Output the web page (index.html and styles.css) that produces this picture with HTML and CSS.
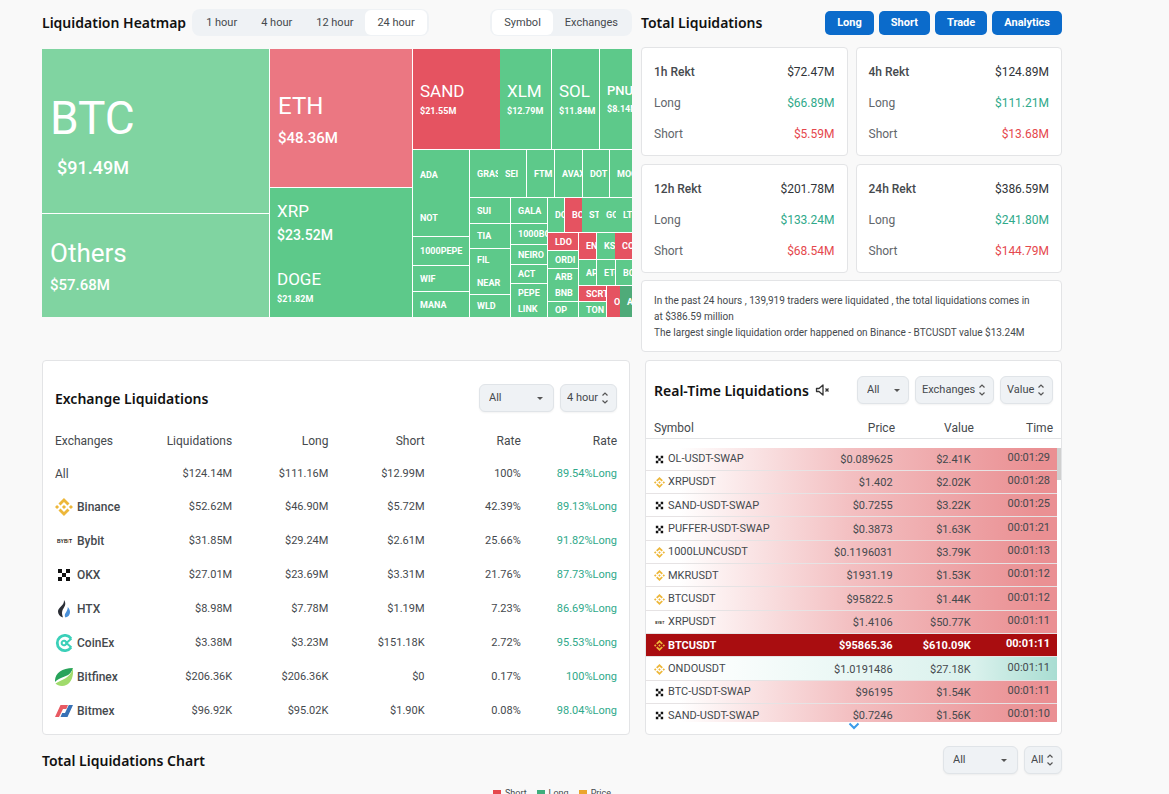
FILE: index.html
```html
<!DOCTYPE html>
<html lang="en">
<head>
<meta charset="utf-8">
<title>Liquidations</title>
<link rel="stylesheet" href="styles.css">
</head>
<body>
<svg class="sprite" aria-hidden="true">
  <symbol id="binance" viewBox="0 0 24 24"><path fill="#edb73a" d="M16.624 13.92l2.718 2.716-7.353 7.353-7.353-7.352 2.717-2.717 4.636 4.66 4.635-4.66zm4.637-4.636L24 12l-2.715 2.716L18.568 12l2.693-2.716zm-9.272 0l2.716 2.692-2.717 2.717L9.272 12l2.717-2.716zm-9.273 0L5.41 12l-2.692 2.692L0 12l2.716-2.716zM11.989.01l7.352 7.33-2.717 2.715-4.635-4.636-4.636 4.66-2.717-2.716L11.989.01z"/></symbol>
  <symbol id="bybit" viewBox="0 0 18 18"><text x="2" y="11" font-family="Liberation Sans" font-weight="700" font-size="5" fill="#222">BYB<tspan fill="#e28a1c">I</tspan>T</text></symbol>
  <symbol id="okx" viewBox="0 0 18 18"><path fill="#111" d="M3 3h4v4H3zM11 3h4v4h-4zM7 7h4v4H7zM3 11h4v4H3zM11 11h4v4h-4z"/></symbol>
  <symbol id="htx" viewBox="0 0 18 18"><path fill="#2b2e35" d="M9 0c2 3 1.500 5 0 7.500C7.500 10 6 12 8 17.500 4.500 16.500 3 14 3 11.500 3 7 9.500 6 9 0z"/><path fill="#4a90d9" d="M12.800 7c1.500 1.500 2.200 3.200 2.200 5 0 3-1.800 5-4.500 5.500C8 14 13 11.500 12.800 7z"/></symbol>
  <symbol id="coinex" viewBox="0 0 18 18"><path fill="none" stroke="#3bd0b9" stroke-width="2.800" d="M16 4.500A7.600 7.600 0 1 0 16 13.500"/><path fill="none" stroke="#3bd0b9" stroke-width="2" d="M16.500 4.500L12.500 8H11A2.300 2.300 0 1 0 11 10h1.500l4 3.500"/></symbol>
  <symbol id="bitfinex" viewBox="0 0 18 18"><path fill="#27a35a" d="M0 14C-.500 6 6 0 18 0 16 7 11 8 6 10c-3 1.200-5 2.500-6 4z"/><path fill="#a0db6c" d="M18 0c1 10-3 18-11 18-3 0-5-1-6.500-2.500C6 11.500 15 11 18 0z"/></symbol>
  <symbol id="bitmex" viewBox="0 0 18 18"><path fill="#e85a62" d="M0 15L5.500 3H13l-1.700 4H8L4 15z"/><path fill="#3871b5" d="M5.500 15l1.700-4H10l3.800-8H18l-5.500 12z"/></symbol>
  <symbol id="updown" viewBox="0 0 8 14"><path fill="none" stroke="#555" stroke-width="1.200" d="M1.500 4.500L4 2l2.500 2.500M1.500 9.500L4 12l2.500-2.500"/></symbol>
  <symbol id="caret" viewBox="0 0 8 14"><path fill="#555" d="M1 6h6L4 9z"/></symbol>
</svg>

<main class="page">
  <div class="top">
    <section class="heat">
      <div class="bar">
        <h2>Liquidation Heatmap</h2>
        <div class="tabs">
          <button type="button">1 hour</button><button type="button">4 hour</button><button type="button">12 hour</button><button type="button" class="on">24 hour</button>
        </div>
        <div class="tabs push">
          <button type="button" class="on">Symbol</button><button type="button">Exchanges</button>
        </div>
      </div>
      <div class="map row">
        <div class="col" style="flex-grow:227">
          <div class="cell pale" style="flex-grow:163"><b class="t48">BTC</b><span class="v18">$91.49M</span></div>
          <div class="cell pale" style="flex-grow:103"><b class="t26">Others</b><span class="v15">$57.68M</span></div>
        </div>
        <div class="col" style="flex-grow:142">
          <div class="cell pink" style="flex-grow:138"><b class="t24">ETH</b><span class="v15">$48.36M</span></div>
          <div class="col joined" style="flex-grow:129">
            <div class="cell" style="flex-grow:69"><b class="t17">XRP</b><span class="v14">$23.52M</span></div>
            <div class="cell" style="flex-grow:60"><b class="t17">DOGE</b><span class="v9">$21.82M</span></div>
          </div>
        </div>
        <div class="col" style="flex-grow:219">
          <div class="row" style="flex-grow:100">
            <div class="row joined" style="flex-grow:138">
              <div class="cell red" style="flex-grow:87"><b class="t17">SAND</b><span class="v9">$21.55M</span></div>
              <div class="cell" style="flex-grow:51"><b class="t17">XLM</b><span class="v9">$12.79M</span></div>
            </div>
            <div class="cell" style="flex-grow:47"><b class="t17">SOL</b><span class="v9">$11.84M</span></div>
            <div class="cell" style="flex-grow:32"><b class="t13">PNUT</b><span class="v9">$8.14M</span></div>
          </div>
          <div class="row" style="flex-grow:167">
            <div class="col" style="flex-grow:56">
              <div class="col joined" style="flex-grow:86">
                <div class="cell" style="flex-grow:49">ADA</div>
                <div class="cell" style="flex-grow:37">NOT</div>
              </div>
              <div class="cell" style="flex-grow:28">1000PEPE</div>
              <div class="cell" style="flex-grow:25">WIF</div>
              <div class="cell" style="flex-grow:25">MANA</div>
            </div>
            <div class="col" style="flex-grow:162">
              <div class="row" style="flex-grow:47">
                <div class="row joined" style="flex-grow:56">
                  <div class="cell" style="flex-grow:28">GRASS</div>
                  <div class="cell" style="flex-grow:28">SEI</div>
                </div>
                <div class="cell" style="flex-grow:27">FTM</div>
                <div class="cell" style="flex-grow:27">AVAX</div>
                <div class="cell" style="flex-grow:26">DOT</div>
                <div class="cell" style="flex-grow:22">MOODENG</div>
              </div>
              <div class="row" style="flex-grow:119">
                <div class="col" style="flex-grow:40">
                  <div class="cell" style="flex-grow:25">SUI</div>
                  <div class="cell" style="flex-grow:24">TIA</div>
                  <div class="col joined" style="flex-grow:45">
                    <div class="cell" style="flex-grow:22">FIL</div>
                    <div class="cell" style="flex-grow:23">NEAR</div>
                  </div>
                  <div class="cell" style="flex-grow:22">WLD</div>
                </div>
                <div class="col" style="flex-grow:36">
                  <div class="cell" style="flex-grow:25">GALA</div>
                  <div class="cell" style="flex-grow:20">1000BONK</div>
                  <div class="cell" style="flex-grow:19">NEIRO</div>
                  <div class="cell" style="flex-grow:18">ACT</div>
                  <div class="col joined" style="flex-grow:33">
                    <div class="cell" style="flex-grow:17">PEPE</div>
                    <div class="cell" style="flex-grow:16">LINK</div>
                  </div>
                </div>
                <div class="col" style="flex-grow:84">
                  <div class="row" style="flex-grow:34">
                    <div class="cell" style="flex-grow:16">DOGS</div>
                    <div class="row joined" style="flex-grow:67">
                      <div class="cell red" style="flex-grow:17">BOME</div>
                      <div class="cell" style="flex-grow:17">STX</div>
                      <div class="cell" style="flex-grow:17">GOAT</div>
                      <div class="cell" style="flex-grow:16">LTC</div>
                    </div>
                  </div>
                  <div class="row" style="flex-grow:84">
                    <div class="col" style="flex-grow:30">
                      <div class="cell red" style="flex-grow:17">LDO</div>
                      <div class="cell" style="flex-grow:17">ORDI</div>
                      <div class="col joined" style="flex-grow:32">
                        <div class="cell" style="flex-grow:16">ARB</div>
                        <div class="cell" style="flex-grow:16">BNB</div>
                      </div>
                      <div class="cell" style="flex-grow:15">OP</div>
                    </div>
                    <div class="col" style="flex-grow:53">
                      <div class="row" style="flex-grow:26">
                        <div class="cell red" style="flex-grow:17">ENA</div>
                        <div class="row joined" style="flex-grow:35">
                          <div class="cell" style="flex-grow:18">KSM</div>
                          <div class="cell red" style="flex-grow:17">COW</div>
                        </div>
                      </div>
                      <div class="row" style="flex-grow:25">
                        <div class="cell" style="flex-grow:17">APT</div>
                        <div class="cell" style="flex-grow:18">ETC</div>
                        <div class="cell" style="flex-grow:16">BCH</div>
                      </div>
                      <div class="row" style="flex-grow:31">
                        <div class="col" style="flex-grow:27">
                          <div class="cell red" style="flex-grow:15">SCRT</div>
                          <div class="cell" style="flex-grow:15">TON</div>
                        </div>
                        <div class="row joined" style="flex-grow:25">
                          <div class="cell red" style="flex-grow:13">OM</div>
                          <div class="cell deep" style="flex-grow:12">AR</div>
                        </div>
                      </div>
                    </div>
                  </div>
                </div>
              </div>
            </div>
          </div>
        </div>
      </div>
    </section>

    <section class="totals">
      <div class="bar">
        <h2>Total Liquidations</h2>
        <div class="actions push">
          <button type="button">Long</button><button type="button">Short</button><button type="button">Trade</button><button type="button">Analytics</button>
        </div>
      </div>
      <div class="stats">
        <dl class="card stat"><div class="head"><dt>1h Rekt</dt><dd>$72.47M</dd></div><div><dt>Long</dt><dd class="up">$66.89M</dd></div><div><dt>Short</dt><dd class="down">$5.59M</dd></div></dl>
        <dl class="card stat"><div class="head"><dt>4h Rekt</dt><dd>$124.89M</dd></div><div><dt>Long</dt><dd class="up">$111.21M</dd></div><div><dt>Short</dt><dd class="down">$13.68M</dd></div></dl>
        <dl class="card stat"><div class="head"><dt>12h Rekt</dt><dd>$201.78M</dd></div><div><dt>Long</dt><dd class="up">$133.24M</dd></div><div><dt>Short</dt><dd class="down">$68.54M</dd></div></dl>
        <dl class="card stat"><div class="head"><dt>24h Rekt</dt><dd>$386.59M</dd></div><div><dt>Long</dt><dd class="up">$241.80M</dd></div><div><dt>Short</dt><dd class="down">$144.79M</dd></div></dl>
      </div>
      <div class="card note">
        <p>In the past 24 hours , 139,919 traders were liquidated , the total liquidations comes in at $386.59 million</p>
        <p>The largest single liquidation order happened on Binance - BTCUSDT value $13.24M</p>
      </div>
    </section>
  </div>

  <div class="mid">
    <section class="card exchange">
      <div class="bar">
        <h2>Exchange Liquidations</h2>
        <div class="pickers push">
          <label class="pick wide"><select aria-label="Symbol"><option>All</option></select><svg><use href="#caret"/></svg></label>
          <label class="pick"><select aria-label="Period"><option>4 hour</option></select><svg><use href="#updown"/></svg></label>
        </div>
      </div>
      <table class="grid">
        <thead><tr><th class="first">Exchanges</th><th>Liquidations</th><th>Long</th><th>Short</th><th>Rate</th><th>Rate</th></tr></thead>
        <tbody>
          <tr class="all"><td>All</td><td>$124.14M</td><td>$111.16M</td><td>$12.99M</td><td>100%</td><td>89.54%Long</td></tr>
          <tr><td><span class="name"><svg><use href="#binance"/></svg>Binance</span></td><td>$52.62M</td><td>$46.90M</td><td>$5.72M</td><td>42.39%</td><td>89.13%Long</td></tr>
          <tr><td><span class="name"><svg><use href="#bybit"/></svg>Bybit</span></td><td>$31.85M</td><td>$29.24M</td><td>$2.61M</td><td>25.66%</td><td>91.82%Long</td></tr>
          <tr><td><span class="name"><svg><use href="#okx"/></svg>OKX</span></td><td>$27.01M</td><td>$23.69M</td><td>$3.31M</td><td>21.76%</td><td>87.73%Long</td></tr>
          <tr><td><span class="name"><svg><use href="#htx"/></svg>HTX</span></td><td>$8.98M</td><td>$7.78M</td><td>$1.19M</td><td>7.23%</td><td>86.69%Long</td></tr>
          <tr><td><span class="name"><svg><use href="#coinex"/></svg>CoinEx</span></td><td>$3.38M</td><td>$3.23M</td><td>$151.18K</td><td>2.72%</td><td>95.53%Long</td></tr>
          <tr><td><span class="name"><svg><use href="#bitfinex"/></svg>Bitfinex</span></td><td>$206.36K</td><td>$206.36K</td><td>$0</td><td>0.17%</td><td>100%Long</td></tr>
          <tr><td><span class="name"><svg><use href="#bitmex"/></svg>Bitmex</span></td><td>$96.92K</td><td>$95.02K</td><td>$1.90K</td><td>0.08%</td><td>98.04%Long</td></tr>
        </tbody>
      </table>
    </section>

    <section class="card live">
      <div class="bar">
        <h2>Real-Time Liquidations</h2>
        <button type="button" class="mute" aria-label="Unmute"><svg viewBox="0 0 16 14"><path fill="none" stroke="#333" stroke-width="1.300" stroke-linejoin="round" d="M1.500 5.500v3H4L8 12V2L4 5.500zM10.500 5.500l3 3M13.500 5.500l-3 3"/></svg></button>
        <div class="pickers push">
          <label class="pick mid-w"><select aria-label="Symbol"><option>All</option></select><svg><use href="#caret"/></svg></label>
          <label class="pick"><select aria-label="Exchange"><option>Exchanges</option></select><svg><use href="#updown"/></svg></label>
          <label class="pick"><select aria-label="Value"><option>Value</option></select><svg><use href="#updown"/></svg></label>
        </div>
      </div>
      <table class="feed-head"><thead><tr><th>Symbol</th><th>Price</th><th>Value</th><th>Time</th></tr></thead></table>
      <div class="scroll">
        <table class="feed">
          <tbody>
            <tr><td><span class="name"><svg><use href="#okx"/></svg>OL-USDT-SWAP</span></td><td>$0.089625</td><td>$2.41K</td><td>00:01:29</td></tr>
            <tr><td><span class="name"><svg><use href="#binance"/></svg>XRPUSDT</span></td><td>$1.402</td><td>$2.02K</td><td>00:01:28</td></tr>
            <tr><td><span class="name"><svg><use href="#okx"/></svg>SAND-USDT-SWAP</span></td><td>$0.7255</td><td>$3.22K</td><td>00:01:25</td></tr>
            <tr><td><span class="name"><svg><use href="#okx"/></svg>PUFFER-USDT-SWAP</span></td><td>$0.3873</td><td>$1.63K</td><td>00:01:21</td></tr>
            <tr><td><span class="name"><svg><use href="#binance"/></svg>1000LUNCUSDT</span></td><td>$0.1196031</td><td>$3.79K</td><td>00:01:13</td></tr>
            <tr><td><span class="name"><svg><use href="#binance"/></svg>MKRUSDT</span></td><td>$1931.19</td><td>$1.53K</td><td>00:01:12</td></tr>
            <tr><td><span class="name"><svg><use href="#binance"/></svg>BTCUSDT</span></td><td>$95822.5</td><td>$1.44K</td><td>00:01:12</td></tr>
            <tr><td><span class="name"><svg><use href="#bybit"/></svg>XRPUSDT</span></td><td>$1.4106</td><td>$50.77K</td><td>00:01:11</td></tr>
            <tr class="huge"><td><span class="name"><svg><use href="#binance"/></svg>BTCUSDT</span></td><td>$95865.36</td><td>$610.09K</td><td>00:01:11</td></tr>
            <tr class="short"><td><span class="name"><svg><use href="#binance"/></svg>ONDOUSDT</span></td><td>$1.0191486</td><td>$27.18K</td><td>00:01:11</td></tr>
            <tr><td><span class="name"><svg><use href="#okx"/></svg>BTC-USDT-SWAP</span></td><td>$96195</td><td>$1.54K</td><td>00:01:11</td></tr>
            <tr><td><span class="name"><svg><use href="#okx"/></svg>SAND-USDT-SWAP</span></td><td>$0.7246</td><td>$1.56K</td><td>00:01:10</td></tr>
          </tbody>
        </table>
        <span class="thumb"></span>
      </div>
      <button type="button" class="more" aria-label="Show more"><svg viewBox="0 0 12 8"><path fill="none" stroke="#3b9bea" stroke-width="2" d="M1.500 1.500L6 6l4.500-4.500"/></svg></button>
    </section>
  </div>

  <section class="chart">
    <div class="bar">
      <h2>Total Liquidations Chart</h2>
      <div class="pickers push">
        <label class="pick wide"><select aria-label="Symbol"><option>All</option></select><svg><use href="#caret"/></svg></label>
        <label class="pick"><select aria-label="Range"><option>All</option></select><svg><use href="#updown"/></svg></label>
      </div>
    </div>
    <div class="legend"><span class="l-short">Short</span><span class="l-long">Long</span><span class="l-price">Price</span></div>
  </section>
</main>
</body>
</html>
```

FILE: styles.css
```css
* { box-sizing: border-box; }
html { overflow: hidden; }
body {
  margin: 0;
  background: #f9f9f9;
  color: #45494d;
  font: 12px/16px Roboto, "Noto Sans", sans-serif;
}
h2, p, dl, dd { margin: 0; }
h2 {
  padding-top: 1px;
  color: #111;
  font: 600 14px/20px "Noto Sans", "Open Sans", sans-serif;
  white-space: nowrap;
}
button, select { font: inherit; color: inherit; }
.sprite { position: absolute; width: 0; height: 0; }
.page { padding: 0 107px 0 42px; }
.bar { display: flex; align-items: center; }
.push { margin-left: auto; }
.card { background: #fff; border: 1px solid #e3e4e6; border-radius: 4px; }

.top { display: grid; grid-template-columns: 590fr 421fr; gap: 9px; }
.top .bar { height: 47px; padding-bottom: 2px; }
.tabs {
  display: flex;
  margin-left: 6px;
  padding: 1px 2px;
  border-radius: 8px;
  background: #eff2f5;
}
.tabs.push { margin-left: auto; }
.tabs button {
  height: 25px;
  padding: 0 12px;
  border: 0;
  border-radius: 6px;
  background: none;
  font-size: 11px;
}
.tabs .on { background: #fff; }

/* treemap: flex-grow carries each block's share */
.map { height: 268px; margin-top: 2px; background: #fff; }
.row, .col { display: flex; gap: 1px; min-width: 0; min-height: 0; }
.row { flex-direction: row; }
.col { flex-direction: column; }
.joined { gap: 0; }
.row > *, .col > * { flex-basis: 0; }
.cell {
  display: flex;
  flex-direction: column;
  justify-content: center;
  min-width: 0;
  min-height: 0;
  overflow: hidden;
  background: #5dc98a;
  color: #fff;
  font-size: 9px;
  font-weight: 700;
  line-height: 12px;
  text-indent: 7px;
  white-space: nowrap;
}
.pale, .pink { text-indent: 8px; }
.pale { background: #80d4a1; }
.pink { background: #eb7782; }
.red { background: #e55361; }
.deep { background: #4fab79; }
.cell b { font-weight: 400; }
.cell .t48 { padding-top: 10px; font-size: 46px; line-height: 64px; }
.t26 { padding-top: 4px; font-size: 26px; line-height: 36px; }
.t24 { padding-top: 4px; font-size: 24px; line-height: 36px; }
.t17 { font-size: 17px; line-height: 24px; }
.cell .t13 { font-size: 13px; line-height: 20px; font-weight: 500; }
.v18 { font-size: 18px; line-height: 36px; font-weight: 500; padding-left: 7px; }
.v15 { font-size: 15px; line-height: 28px; font-weight: 500; }
.v14 { font-size: 14px; line-height: 24px; font-weight: 500; }
.v9 { font-size: 9px; line-height: 16px; }

.actions { display: flex; gap: 5px; }
.actions button {
  height: 24px;
  padding: 0 12px;
  border: 0;
  border-radius: 5px;
  background: #0b6bcb;
  color: #fff;
  font-size: 11px;
  font-weight: 700;
}
.stats { display: grid; grid-template-columns: 1fr 1fr; gap: 8px; }
.stat { padding: 9px 12px 5px; }
.stat div { display: flex; justify-content: space-between; line-height: 31px; }
.stat dt { color: #62666b; }
.stat .head dt { color: #45494d; font-weight: 500; }
.stat .head dd { color: #303438; }
.up { color: #2fa98a; }
.down { color: #e5484d; }
.note { margin-top: 7px; padding: 12px 24px 10px 12px; font-size: 10px; }

.mid { display: grid; grid-template-columns: 588fr 417fr; gap: 15px; margin-top: 8px; }
.mid .card { height: 375px; }
.pickers { display: flex; gap: 6px; }
.pick { display: grid; align-items: center; }
.pick > * { grid-area: 1 / 1; }
.pick select {
  height: 28px;
  padding: 0 17px 1px 6px;
  border: 1px solid #e0e4e8;
  border-radius: 6px;
  background: #eff2f5;
  box-shadow: 0 1px 2px #0000000d;
  font-size: 11px;
  appearance: none;
}
.pick svg { justify-self: end; width: 8px; height: 14px; margin-right: 8px; pointer-events: none; }
.pick.wide select { width: 75px; padding-left: 9px; }
.pick.mid-w select { width: 52px; padding-left: 9px; }
.pick.wide svg { margin-right: 10px; }

table { width: 100%; border-collapse: collapse; table-layout: fixed; }
th { font-weight: 400; }
th, td { padding: 0; text-align: right; white-space: nowrap; }
th:first-child, td:first-child { text-align: left; }
.name { display: flex; align-items: center; }

.exchange { padding: 23px 12px 0; }
.grid { margin-top: 13px; }
.grid th { height: 32px; }
.grid .first { width: 81px; }
.grid td { height: 34px; font-size: 11px; }
.grid .all td { height: 33px; }
.grid td:first-child { padding: 0; font-size: 12px; }
.grid td:last-child { color: #2fa98a; }
.grid .name { gap: 4px; font-weight: 500; }
.grid .name svg { width: 18px; height: 18px; }

.live { padding-top: 15px; }
.live .bar { padding: 0 8px; }
.mute, .more { padding: 0; border: 0; background: none; }
.mute { margin-left: 6px; }
.mute svg { display: block; width: 16px; height: 14px; }
.feed-head { margin-top: 14px; border-bottom: 1px solid #e3e4e6; }
.feed-head th { height: 20px; }
.feed-head th:first-child { padding-left: 8px; }
.feed-head th:nth-child(2), .feed td:nth-child(2) { width: 20%; }
.feed-head th:nth-child(3), .feed td:nth-child(3) { width: 19%; }
.feed-head th:nth-child(4), .feed td:nth-child(4) { width: 21%; }
.feed-head th:last-child { padding-right: 8px; }
.scroll { position: relative; height: 274px; margin-top: 9px; padding-right: 4px; overflow: hidden; }
.feed { height: 280px; font-size: 11px; }
.feed tr { border-bottom: 1px solid #e6e3e4; background: linear-gradient(90deg, #fff 8%, #f3bfc1 50%, #ea9093 95%); }
.feed td { padding-top: 2px; }
.feed td:first-child { padding: 1px 0 0 8px; }
.feed td:last-child { padding: 0 7px 2px 0; }
.feed .name { gap: 3px; }
.feed .name svg { width: 11px; height: 11px; }
.feed .huge { background: #a90d10; color: #fff; font-weight: 700; }
.feed .short { background: linear-gradient(90deg, #fff 10%, #d9f1ec 80%, #a9ddd2); }
.thumb { position: absolute; top: 0; right: 0; width: 4px; height: 32px; background: #d0d0d0; }
.more { display: block; margin: 0 auto; }
.more svg { display: block; width: 12px; height: 8px; }

.chart .bar { height: 50px; }
.legend { display: flex; justify-content: center; gap: 10px; font-size: 9px; }
.legend span { display: flex; align-items: center; gap: 4px; }
.legend span::before { content: ""; width: 8px; height: 6px; background: #e5484d; }
.legend .l-long::before { background: #3fae7c; }
.legend .l-price::before { background: #eba52d; }
```
